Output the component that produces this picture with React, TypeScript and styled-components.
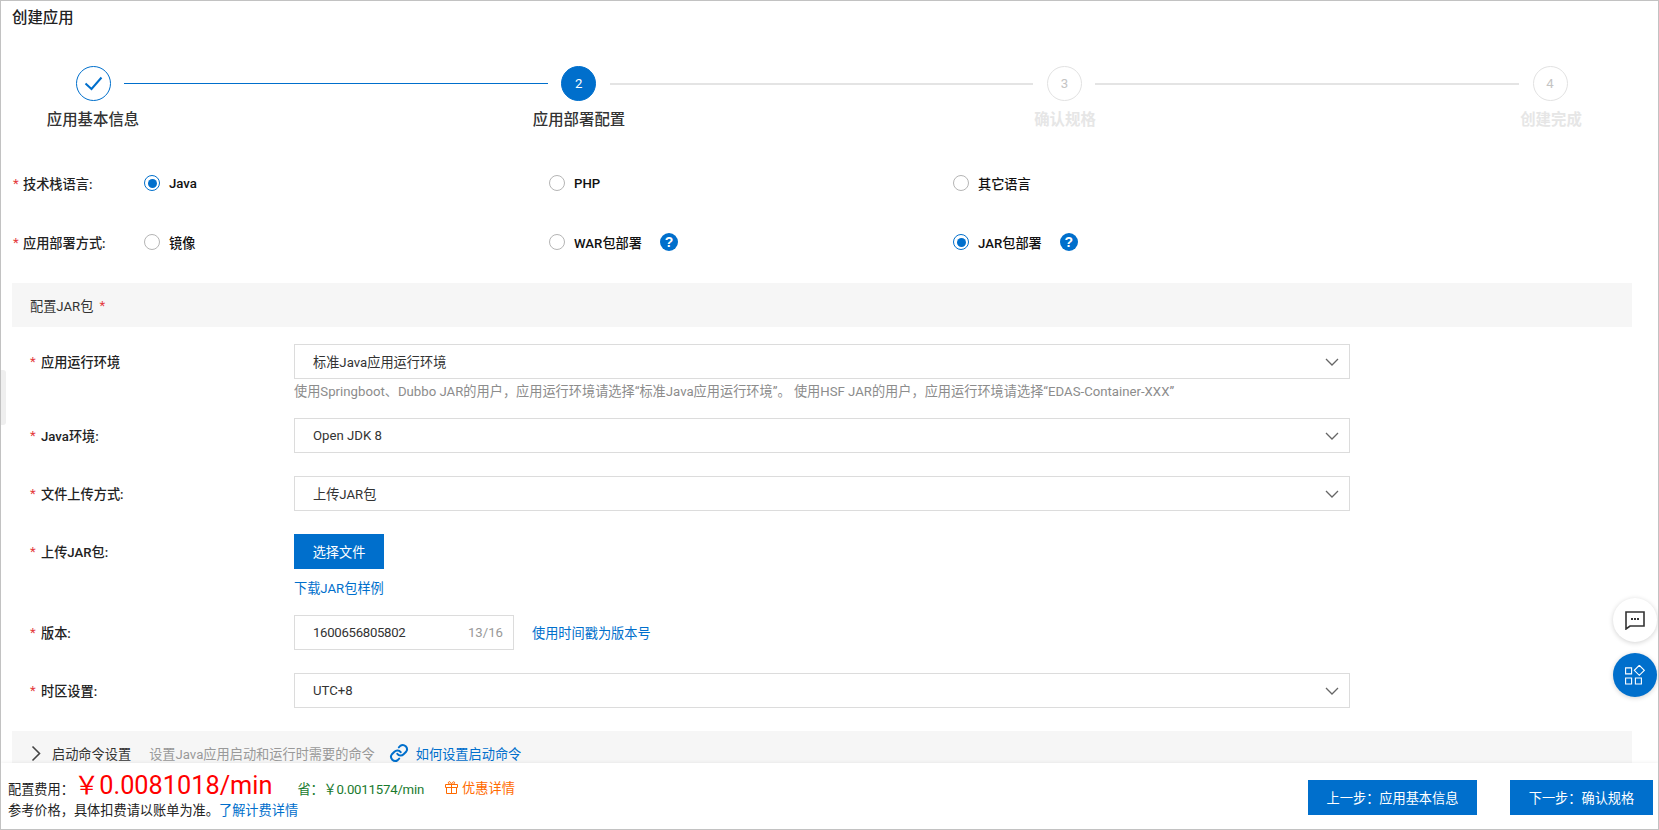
import React from 'react';
import styled, { createGlobalStyle } from 'styled-components';

const BLUE = '#006fcc';
// full-width punctuation, the source text uses these
const COLON = '\uFF1A';
const COMMA = '\uFF0C';
const YEN = '\uFFE5';

const GlobalStyle = createGlobalStyle`
  html, body {
    margin: 0;
    padding: 0;
    background: #fff;
  }
  body {
    font-family: Roboto, "Noto Sans CJK SC", sans-serif;
    font-size: 13.2px;
    color: #333;
  }
`;

const Page = styled.div`
  position: relative;
  box-sizing: border-box;
  width: 1659px;
  height: 830px;
  border: 1px solid #c2c2c2;
  display: flex;
  flex-direction: column;
  overflow: hidden;
`;

const Main = styled.main`
  flex: 1;
  min-height: 0;
  overflow: hidden;
  padding: 0 26px 0 11px;
`;

const Title = styled.h1`
  margin: 0;
  height: 35px;
  line-height: 35px;
  font-size: 15.4px;
  font-weight: 500;
  color: #222;
`;

const Stepper = styled.div`
  margin: 30px 0 0 -11px;
  width: 1658px;
`;

const StepTrack = styled.div`
  box-sizing: border-box;
  display: flex;
  align-items: center;
  padding-left: 74.5px;
  width: 1566.5px;
`;

const StepCircle = styled.div<{ $state: 'done' | 'active' | 'todo' }>`
  flex: none;
  box-sizing: border-box;
  width: 35px;
  height: 35px;
  border-radius: 50%;
  display: flex;
  align-items: center;
  justify-content: center;
  font-size: 13.2px;
  border: 1px solid ${(p) => (p.$state === 'todo' ? '#e2e2e2' : BLUE)};
  background: ${(p) => (p.$state === 'active' ? BLUE : '#fff')};
  color: ${(p) => (p.$state === 'active' ? '#fff' : '#c4c4c4')};
`;

const StepLine = styled.div<{ $done?: boolean }>`
  flex: 1;
  height: ${(p) => (p.$done ? '1px' : '2px')};
  margin: 0 13.5px;
  background: ${(p) => (p.$done ? BLUE : '#e4e4e4')};
`;

const StepLabels = styled.div`
  display: grid;
  grid-template-columns: repeat(4, 120px);
  column-gap: 366px;
  margin: 9px 0 0 32px;
`;

const StepLabel = styled.div<{ $muted?: boolean }>`
  text-align: center;
  line-height: 20px;
  font-size: 15.4px;
  font-weight: ${(p) => (p.$muted ? 700 : 500)};
  color: ${(p) => (p.$muted ? '#e6e6e6' : '#333')};
`;

const RadioRow = styled.div<{ $top: number }>`
  display: grid;
  grid-template-columns: 132px 405px 404px 1fr;
  align-items: center;
  height: 20px;
  margin-top: ${(p) => p.$top}px;
`;

const RowLabel = styled.div`
  display: flex;
  align-items: center;
  padding-left: 1px;
  color: #222;
  font-weight: 500;
`;

const Star = styled.span`
  color: #e4393c;
  width: 10px;
  flex: none;
  font-weight: 400;
`;

const RadioItem = styled.label`
  display: flex;
  align-items: center;
  gap: 9px;
  color: #111;
  font-weight: 500;
`;

const RadioDot = styled.span<{ $on?: boolean }>`
  box-sizing: border-box;
  width: 16px;
  height: 16px;
  flex: none;
  border-radius: 50%;
  border: 1px solid ${(p) => (p.$on ? BLUE : '#b5b5b5')};
  display: flex;
  align-items: center;
  justify-content: center;

  &::after {
    content: '';
    display: ${(p) => (p.$on ? 'block' : 'none')};
    width: 9px;
    height: 9px;
    border-radius: 50%;
    background: ${BLUE};
  }
`;

const Help = styled.span`
  width: 18px;
  height: 18px;
  margin-left: 9px;
  border-radius: 50%;
  background: ${BLUE};
  color: #fff;
  font-family: "Liberation Sans", sans-serif;
  font-size: 14px;
  font-weight: 700;
  line-height: 18px;
  text-align: center;
`;

const Band = styled.div`
  background: #f6f6f6;
  display: flex;
  align-items: center;
`;

const ConfigBand = styled(Band)`
  margin-top: 31px;
  height: 44px;
  padding-left: 18px;
  color: #333;
`;

const BandStar = styled.span`
  color: #e4393c;
  margin-left: 6px;
`;

const Form = styled.div`
  display: flex;
  flex-direction: column;
  gap: 17px;
  padding: 17px 0 17px;
`;

const FormRow = styled.div<{ $pad?: number }>`
  display: grid;
  grid-template-columns: 282px 1056px;
  padding-bottom: ${(p) => p.$pad ?? 6}px;
`;

const FormLabel = styled.div`
  display: flex;
  align-items: center;
  height: 35px;
  padding-left: 18px;
  color: #222;
  font-weight: 500;
`;

const FormStar = styled(Star)`
  width: 11px;
`;

const Select = styled.div`
  box-sizing: border-box;
  height: 35px;
  border: 1px solid #dcdcdc;
  padding: 0 10px 0 18px;
  display: flex;
  align-items: center;
  justify-content: space-between;
  color: #333;
`;

const Hint = styled.div`
  margin-top: 4px;
  height: 18px;
  line-height: 18px;
  color: #8c8c8c;
`;

const PrimaryButton = styled.button`
  display: block;
  height: 35px;
  border: 0;
  padding: 0;
  background: ${BLUE};
  color: #fff;
  font: inherit;
`;

const UploadButton = styled(PrimaryButton)`
  width: 90px;
`;

const Link = styled.a`
  color: ${BLUE};
  text-decoration: none;
`;

const SampleLink = styled(Link)`
  display: block;
  margin-top: 10px;
  line-height: 19px;
`;

const VersionWrap = styled.div`
  display: flex;
  align-items: center;
  gap: 18px;
`;

const VersionInput = styled.div`
  box-sizing: border-box;
  width: 220px;
  height: 35px;
  border: 1px solid #dcdcdc;
  padding: 0 10px 0 18px;
  display: flex;
  align-items: center;
  justify-content: space-between;
`;

const VersionValue = styled.span`
  letter-spacing: -0.3px;
`;

const Counter = styled.span`
  color: #999;
`;

const CommandBand = styled(Band)`
  height: 46px;
  padding: 0 0 2px 19px;
  box-sizing: border-box;
`;

const CommandTitle = styled.span`
  margin-left: 11px;
  color: #333;
`;

const CommandHint = styled.span`
  margin-left: 18px;
  color: #999;
`;

const CommandLink = styled(Link)`
  display: flex;
  align-items: center;
  gap: 7px;
  margin-left: 14px;
`;

const Footer = styled.footer`
  position: relative;
  flex: none;
  height: 66px;
  box-sizing: border-box;
  background: #fff;
  box-shadow: 0 -1px 3px rgba(0, 0, 0, 0.05);
  padding: 0 5px 0 7px;
  display: flex;
  align-items: center;
  justify-content: space-between;
`;

const Cost = styled.div`
  display: flex;
  flex-direction: column;
`;

const CostTop = styled.div`
  display: flex;
  align-items: baseline;
  height: 30px;
  color: #222;
`;

const Price = styled.span`
  font-size: 25.3px;
  line-height: 30px;
  color: #ff0000;
`;

const Saving = styled.span`
  margin-left: 25px;
  color: #1a7a2e;
  letter-spacing: -0.2px;
`;

const Offer = styled.span`
  margin-left: 21px;
  display: inline-flex;
  align-items: center;
  gap: 4px;
  color: #ff6a00;
`;

const CostNote = styled.div`
  line-height: 20px;
  color: #222;
`;

const FooterActions = styled.div`
  display: flex;
  gap: 33px;
  margin-top: 3px;
`;

const PrevButton = styled(PrimaryButton)`
  width: 169px;
`;

const NextButton = styled(PrimaryButton)`
  width: 143px;
`;

const Float = styled.div<{ $top: number; $blue?: boolean }>`
  position: absolute;
  right: 1px;
  top: ${(p) => p.$top}px;
  width: 44px;
  height: 44px;
  border-radius: 50%;
  background: ${(p) => (p.$blue ? BLUE : '#fff')};
  box-shadow: 0 1px 5px rgba(0, 0, 0, 0.18);
  display: flex;
  align-items: center;
  justify-content: center;
`;

const SideHandle = styled.div`
  position: absolute;
  left: 0;
  top: 369px;
  width: 5px;
  height: 55px;
  background: #efefef;
  border-radius: 0 3px 3px 0;
`;

const ChevronDown = () => (
  <svg width="14" height="8" viewBox="0 0 14 8" fill="none">
    <path d="M1 1l6 6 6-6" stroke="#666" strokeWidth="1.3" />
  </svg>
);

const Dropdown: React.FC<{ value: string }> = ({ value }) => (
  <Select>
    <span>{value}</span>
    <ChevronDown />
  </Select>
);

const Field: React.FC<{ label: string }> = ({ label }) => (
  <FormLabel>
    <FormStar>*</FormStar>
    {label}
  </FormLabel>
);

export default function App() {
  return (
    <>
      <GlobalStyle />
      <Page>
        <Main>
          <Title>创建应用</Title>
          <Stepper>
            <StepTrack>
              <StepCircle $state="done">
                <svg width="19" height="15" viewBox="0 0 19 15" fill="none">
                  <path d="M1.5 7.5l6 5.5L17.5 1.5" stroke={BLUE} strokeWidth="2" />
                </svg>
              </StepCircle>
              <StepLine $done />
              <StepCircle $state="active">2</StepCircle>
              <StepLine />
              <StepCircle $state="todo">3</StepCircle>
              <StepLine />
              <StepCircle $state="todo">4</StepCircle>
            </StepTrack>
            <StepLabels>
              <StepLabel>应用基本信息</StepLabel>
              <StepLabel>应用部署配置</StepLabel>
              <StepLabel $muted>确认规格</StepLabel>
              <StepLabel $muted>创建完成</StepLabel>
            </StepLabels>
          </Stepper>

          <RadioRow $top={43}>
            <RowLabel><Star>*</Star>技术栈语言:</RowLabel>
            <RadioItem><RadioDot $on />Java</RadioItem>
            <RadioItem><RadioDot />PHP</RadioItem>
            <RadioItem><RadioDot />其它语言</RadioItem>
          </RadioRow>
          <RadioRow $top={39}>
            <RowLabel><Star>*</Star>应用部署方式:</RowLabel>
            <RadioItem><RadioDot />镜像</RadioItem>
            <RadioItem><RadioDot />WAR包部署<Help>?</Help></RadioItem>
            <RadioItem><RadioDot $on />JAR包部署<Help>?</Help></RadioItem>
          </RadioRow>

          <ConfigBand>配置JAR包<BandStar>*</BandStar></ConfigBand>

          <Form>
            <FormRow $pad={0}>
              <Field label="应用运行环境" />
              <div>
                <Dropdown value="标准Java应用运行环境" />
                <Hint>使用Springboot、Dubbo JAR的用户{COMMA}应用运行环境请选择“标准Java应用运行环境”。 使用HSF JAR的用户{COMMA}应用运行环境请选择“EDAS-Container-XXX”</Hint>
              </div>
            </FormRow>
            <FormRow>
              <Field label="Java环境:" />
              <Dropdown value="Open JDK 8" />
            </FormRow>
            <FormRow>
              <Field label="文件上传方式:" />
              <Dropdown value="上传JAR包" />
            </FormRow>
            <FormRow $pad={0}>
              <Field label="上传JAR包:" />
              <div>
                <UploadButton>选择文件</UploadButton>
                <SampleLink>下载JAR包样例</SampleLink>
              </div>
            </FormRow>
            <FormRow>
              <Field label="版本:" />
              <VersionWrap>
                <VersionInput>
                  <VersionValue>1600656805802</VersionValue>
                  <Counter>13/16</Counter>
                </VersionInput>
                <Link>使用时间戳为版本号</Link>
              </VersionWrap>
            </FormRow>
            <FormRow>
              <Field label="时区设置:" />
              <Dropdown value="UTC+8" />
            </FormRow>
          </Form>

          <CommandBand>
            <svg width="10" height="17" viewBox="0 0 10 17" fill="none">
              <path d="M1.5 1.5l7 7-7 7" stroke="#444" strokeWidth="1.6" />
            </svg>
            <CommandTitle>启动命令设置</CommandTitle>
            <CommandHint>设置Java应用启动和运行时需要的命令</CommandHint>
            <CommandLink>
              <svg width="20" height="20" viewBox="0 0 24 24" fill="none" stroke={BLUE} strokeWidth="2.4" strokeLinecap="round">
                <path d="M10 13a5 5 0 0 0 7.5.5l3-3a5 5 0 0 0-7-7l-1.7 1.7" />
                <path d="M14 11a5 5 0 0 0-7.5-.5l-3 3a5 5 0 0 0 7 7l1.7-1.7" />
              </svg>
              如何设置启动命令
            </CommandLink>
          </CommandBand>
        </Main>

        <Footer>
          <Cost>
            <CostTop>
              配置费用{COLON}
              <Price>{YEN}0.0081018/min</Price>
              <Saving>省{COLON}{YEN}0.0011574/min</Saving>
              <Offer>
                <svg width="13" height="13" viewBox="0 0 13 13" fill="none" stroke="#ff6a00" strokeWidth="1">
                  <path d="M.5 3.5h12v3h-12zM1.5 6.5v6h10v-6M6.5 3.5v9M6.5 3.5C4 3.5 3 2.5 3.5 1.2S6 1 6.5 3.5C7 1 8.8.2 9.5 1.2S9 3.5 6.5 3.5z" />
                </svg>
                优惠详情
              </Offer>
            </CostTop>
            <CostNote>参考价格{COMMA}具体扣费请以账单为准。<Link>了解计费详情</Link></CostNote>
          </Cost>
          <FooterActions>
            <PrevButton>上一步{COLON}应用基本信息</PrevButton>
            <NextButton>下一步{COLON}确认规格</NextButton>
          </FooterActions>
        </Footer>

        <Float $top={597}>
          <svg width="20" height="19" viewBox="0 0 20 19" fill="none">
            <path d="M1 1h18v14H5l-4 3z" stroke="#333" strokeWidth="1.6" />
            <path d="M6 8h2M9 8h2M12 8h2" stroke="#333" strokeWidth="1.8" />
          </svg>
        </Float>
        <Float $top={652} $blue>
          <svg width="20" height="20" viewBox="0 0 20 20" fill="none" stroke="#fff" strokeWidth="1.1">
            <path d="M.6 2.9h6v6h-6zM.6 13h6v6h-6zM10.4 13h6v6h-6zM14.3.3l5 5-5 5-5-5z" />
          </svg>
        </Float>
        <SideHandle />
      </Page>
    </>
  );
}
